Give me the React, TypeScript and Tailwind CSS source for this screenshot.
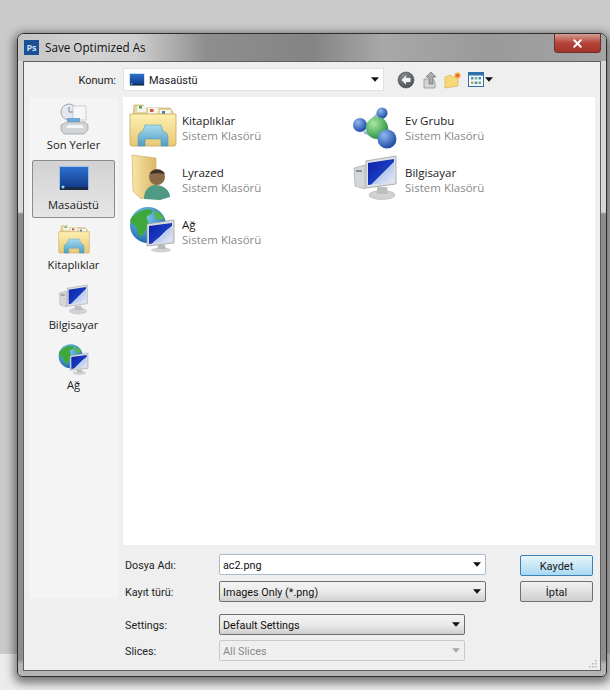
import React from 'react';
import { X } from 'lucide-react';

// small solid caret used by the comboboxes
const Caret = ({ muted = false }: { muted?: boolean }) => (
  <svg width="8" height="5" viewBox="0 0 9 5" className="shrink-0">
    <path d="M0 0h9L4.5 5z" fill={muted ? '#a8a8a8' : '#111'} />
  </svg>
);

const PsLogo = () => (
  <div className="w-[15px] h-[15px] bg-[#1c4f94] flex items-center justify-center text-[9px] font-bold text-[#cfe0f4] leading-none">
    Ps
  </div>
);

const FolderLib = ({ size = 48 }: { size?: number }) => (
  <svg width={size} height={size} viewBox="0 0 48 48">
    <defs>
      <linearGradient id="flib" x1="0" y1="0" x2="0" y2="1">
        <stop offset="0" stopColor="#fdf0b0" />
        <stop offset="1" stopColor="#e8c877" />
      </linearGradient>
      <linearGradient id="flibb" x1="0" y1="0" x2="0" y2="1">
        <stop offset="0" stopColor="#a8dcee" />
        <stop offset="1" stopColor="#4e9cc4" />
      </linearGradient>
    </defs>
    <path d="M5 4h9l3 3h24l3 4v4H4z" fill="#e4d49a" stroke="#c5ab62" strokeWidth="0.7" />
    <rect x="8" y="5" width="9" height="6" fill="#f4f4ec" />
    <rect x="10" y="5" width="3" height="2.5" fill="#4aa35a" />
    <rect x="19" y="7" width="10" height="6" fill="#f4f4ec" />
    <rect x="21" y="8" width="3.5" height="3" fill="#d2583a" />
    <rect x="31" y="9" width="11" height="6" fill="#f4f4ec" />
    <rect x="33" y="10" width="3" height="3" fill="#4f7fb0" />
    <path d="M1 13h46v30a2 2 0 0 1-2 2H3a2 2 0 0 1-2-2z" fill="url(#flib)" stroke="#c5a55a" strokeWidth="0.8" />
    <path d="M9 45v-9c0-3 2-5 5-6l2-6h16l2 6c3 1 5 3 5 6v9h-7v-7H16v7z" fill="url(#flibb)" stroke="#4d8fb0" strokeWidth="0.5" />
  </svg>
);

const Monitor = ({ size = 48 }: { size?: number }) => (
  <svg width={size} height={size} viewBox="0 0 48 48">
    <defs>
      <linearGradient id="scr" x1="0" y1="0" x2="1" y2="1">
        <stop offset="0" stopColor="#0a1fa8" />
        <stop offset="0.55" stopColor="#1a3cc0" />
        <stop offset="0.56" stopColor="#b8c8ee" />
        <stop offset="1" stopColor="#e8eef8" />
      </linearGradient>
    </defs>
    <path d="M2 15l11-3v24l-10-3z" fill="#d4d6d8" stroke="#9a9ea2" strokeWidth="0.6" />
    <rect x="4" y="17" width="6" height="2" fill="#8a8e92" />
    <path d="M14 8l30-5v28l-30 4z" fill="#dfe2e4" stroke="#9a9ea2" strokeWidth="0.8" />
    <path d="M16 10l26-4v23l-26 3z" fill="url(#scr)" />
    <ellipse cx="30" cy="42" rx="13" ry="4.5" fill="#d0d2d4" stroke="#a8aaac" strokeWidth="0.5" />
    <path d="M25 34h10l1 7H25z" fill="#bcbec0" />
  </svg>
);

const Globe = ({ size = 48 }: { size?: number }) => (
  <svg width={size} height={size} viewBox="0 0 48 48">
    <defs>
      <radialGradient id="gl" cx="0.4" cy="0.3" r="0.8">
        <stop offset="0" stopColor="#7fd0ee" />
        <stop offset="1" stopColor="#0f5aa8" />
      </radialGradient>
      <linearGradient id="scr2" x1="0" y1="0" x2="1" y2="1">
        <stop offset="0" stopColor="#0a1fa8" />
        <stop offset="0.55" stopColor="#1a3cc0" />
        <stop offset="0.56" stopColor="#b8c8ee" />
        <stop offset="1" stopColor="#e8eef8" />
      </linearGradient>
    </defs>
    <circle cx="19" cy="20" r="18" fill="url(#gl)" />
    <path d="M8 8c5-3 10-5 15-3 2 3-2 5-5 6-1 4 3 6 1 10-2 5-5 9-8 11-3-3-2-8-5-11-3-2-6-4-4-8z" fill="#3fa83c" />
    <path d="M26 6c4 1 8 4 9 8l-6 1c-3-2-4-6-3-9z" fill="#57b548" />
    <path d="M18 19l27-4v23l-27 3z" fill="#d9dcdf" stroke="#92969a" strokeWidth="0.7" />
    <path d="M20 21l23-3v18l-23 3z" fill="url(#scr2)" />
    <ellipse cx="32" cy="45" rx="10" ry="2.6" fill="#cfd1d3" />
    <path d="M29 40h7l1 4h-9z" fill="#b8babc" />
  </svg>
);

const HomeGroup = () => (
  <svg width="48" height="48" viewBox="0 -5 48 48">
    <defs>
      <radialGradient id="hgb" cx="0.35" cy="0.3" r="0.8">
        <stop offset="0" stopColor="#8fb8ee" />
        <stop offset="1" stopColor="#123f9e" />
      </radialGradient>
      <radialGradient id="hgg" cx="0.35" cy="0.3" r="0.8">
        <stop offset="0" stopColor="#a8e8a0" />
        <stop offset="1" stopColor="#1c8a3c" />
      </radialGradient>
    </defs>
    <path d="M10 24L26 8M28 8l12 26M12 26l26 10" stroke="#9fb8d8" strokeWidth="3" />
    <circle cx="30" cy="7" r="5.5" fill="url(#hgb)" />
    <circle cx="8" cy="19" r="7" fill="url(#hgb)" />
    <circle cx="25" cy="22" r="11" fill="url(#hgg)" />
    <circle cx="35" cy="33" r="9.5" fill="url(#hgb)" />
  </svg>
);

const UserFolder = () => (
  <svg width="48" height="48" viewBox="0 0 48 48">
    <defs>
      <linearGradient id="uf" x1="0" y1="0" x2="1" y2="0">
        <stop offset="0" stopColor="#f8e6a8" />
        <stop offset="1" stopColor="#dcb868" />
      </linearGradient>
    </defs>
    <path d="M3 2l24 3v36L12 46 4 38z" fill="url(#uf)" stroke="#c8a860" strokeWidth="0.6" />
    <circle cx="28" cy="24" r="8" fill="#8a6a48" />
    <path d="M21 21c1-5 12-6 15 0-3-1-11-1-15 0z" fill="#3a3228" />
    <path d="M15 46c0-9 5-14 12-14s14 5 14 12l-10 3z" fill="#4f9a84" />
  </svg>
);

const RecentPlaces = () => (
  <svg width="32" height="32" viewBox="0 0 32 32">
    <circle cx="11" cy="9" r="8" fill="#e2e8ee" stroke="#9fa8b0" strokeWidth="1" />
    <path d="M11 4v5h4" stroke="#7a8490" strokeWidth="1" fill="none" />
    <rect x="15" y="3" width="13" height="14" fill="#f4f6f8" stroke="#aeb6bc" strokeWidth="0.6" />
    <path d="M9 15h13v7H9z" fill="#6fa8d8" />
    <path d="M3 22l6-3h18l3 3v5l-4 4H6l-3-4z" fill="#d2d5d8" stroke="#888e94" strokeWidth="0.6" />
    <path d="M10 22h14l2 3H8z" fill="#f4f5f6" />
  </svg>
);

const Desktop = ({ size = 32 }: { size?: number }) => (
  <svg width={size} height={size} viewBox="0 0 32 32">
    <defs>
      <linearGradient id="dsk" x1="0" y1="0" x2="0" y2="1">
        <stop offset="0" stopColor="#2f6fd0" />
        <stop offset="1" stopColor="#123e8c" />
      </linearGradient>
    </defs>
    <rect x="1" y="3" width="30" height="24" fill="#9fc0e4" />
    <rect x="2" y="4" width="28" height="20" fill="url(#dsk)" />
    <rect x="2" y="24" width="28" height="3" fill="#1a2a44" />
    <circle cx="5" cy="24" r="1.6" fill="#8fd4f0" />
  </svg>
);

const NavItem = ({ label, icon, active = false }: { label: string; icon: React.ReactNode; active?: boolean }) => (
  <div
    className={`w-[83px] h-[58px] flex flex-col items-center pt-[2px] gap-[2px] rounded-[2px] border text-[11.2px] ${
      active ? 'bg-gradient-to-b from-[#d2d2d2] to-[#e6e6e6] border-[#8b8b8b]' : 'border-transparent'
    }`}
  >
    {icon}
    <span className="leading-[15px]">{label}</span>
  </div>
);

const FileItem = ({ name, icon }: { name: string; icon: React.ReactNode }) => (
  <div className="flex items-center h-[52px] w-[223px]">
    <div className="w-[54px] pl-[1px] shrink-0">{icon}</div>
    <div className="leading-[15px] pt-[6px]">
      <div className="text-[#1a1a1a]">{name}</div>
      <div className="text-[#8a8a8a]">Sistem Klasörü</div>
    </div>
  </div>
);

const Field = ({
  label,
  value,
  width,
  kind,
}: {
  label: string;
  value: string;
  width: string;
  kind: 'input' | 'select' | 'disabled';
}) => {
  const box =
    kind === 'input'
      ? 'bg-white border-[#a9bccd] text-[#111]'
      : kind === 'select'
        ? 'bg-gradient-to-b from-[#f3f3f3] via-[#ebebeb] to-[#cfcfcf] border-[#6f6f6f] text-[#111]'
        : 'bg-[#efefef] border-[#c8c8c8] text-[#8a8a8a]';
  return (
    <div className="flex items-center font-['Roboto',sans-serif] text-[10.8px]">
      <span className="w-[94px] pt-[4px] text-[#222]">{label}</span>
      <div className={`h-[21px] flex items-center justify-between pl-[3px] pr-[4px] rounded-[2px] border ${box} ${width}`}>
        <span className="pt-[3px]">{value}</span>
        <Caret muted={kind === 'disabled'} />
      </div>
    </div>
  );
};

const Toolbar = () => (
  <div className="flex items-center gap-[5.5px] ml-[13px]">
    <svg width="18" height="18" viewBox="0 0 18 18">
      <defs>
        <radialGradient id="bk" cx="0.4" cy="0.3" r="0.8">
          <stop offset="0" stopColor="#8b8f92" />
          <stop offset="1" stopColor="#45484a" />
        </radialGradient>
      </defs>
      <circle cx="9" cy="9" r="8" fill="url(#bk)" stroke="#55585a" strokeWidth="0.6" />
      <path d="M9 4.5L4.5 9 9 13.5V11h4.5V7H9z" fill="#f2f2f2" />
    </svg>
    <svg width="18" height="18" viewBox="0 0 18 18">
      <path d="M3 8h9l2 3v6H3z" fill="#d4d6d8" stroke="#85888a" strokeWidth="0.7" />
      <path d="M10 1l5 5h-3v7H8V6H5z" fill="#a9acae" stroke="#606366" strokeWidth="0.6" />
    </svg>
    <svg width="18" height="18" viewBox="0 0 18 18">
      <path d="M1 6l6-2 1 2h6v9L1 17z" fill="#f8d978" stroke="#d2a94c" strokeWidth="0.6" />
      <circle cx="13.5" cy="4.5" r="3" fill="#f0a23c" />
      <circle cx="13.5" cy="4.5" r="1.2" fill="#e8502a" />
    </svg>
    <div className="flex items-center gap-[1px]">
      <svg width="16" height="15" viewBox="0 0 16 15">
        <rect x="0.5" y="0.5" width="15" height="14" fill="#f4f8fc" stroke="#2f6fa8" />
        <rect x="1" y="1" width="14" height="2.5" fill="#2f6fa8" />
        <rect x="3" y="5" width="2.5" height="2.5" fill="#4f8fc8" />
        <rect x="6.8" y="5" width="2.5" height="2.5" fill="#7fae5f" />
        <rect x="10.5" y="5" width="2.5" height="2.5" fill="#4f8fc8" />
        <rect x="3" y="9.5" width="2.5" height="2.5" fill="#d09a4f" />
        <rect x="6.8" y="9.5" width="2.5" height="2.5" fill="#4f8fc8" />
        <rect x="10.5" y="9.5" width="2.5" height="2.5" fill="#7fae5f" />
      </svg>
      <Caret />
    </div>
  </div>
);

export default function App() {
  return (
    <div className="w-[610px] h-[690px] overflow-hidden bg-[linear-gradient(#cacaca_654px,#f4f4f4_654px,#ececec_655px)] pt-[33px] pl-[17px] font-['Open_Sans',sans-serif] text-[11.5px] text-[#1a1a1a]">
      {/* window */}
      <div className="w-[590px] h-[644px] rounded-t-[7px] rounded-b-[5px] border border-[#2e2e2e] bg-[linear-gradient(#d8d8d8_178px,#8c8c8c_180px,#8c8c8c_625px,#b4b4b4_630px)] px-[5px] pb-[5px] shadow-[0_3px_10px_3px_rgba(0,0,0,0.5)] flex flex-col">
        <div className="-mx-[5px] px-[5px] rounded-t-[6px] h-[27px] flex items-center justify-between shrink-0 bg-[linear-gradient(90deg,#c4c4c4_0%,#d2d2d2_12%,#cfcfcf_20%,#8e8e8e_32%,#848484_50%,#a8a8a8_62%,#9a9a9a_80%,#a4a4a4_100%)]">
          <div className="flex items-center gap-[5px] pl-[1px]">
            <PsLogo />
            <span className="text-[11.7px] text-[#111] pl-[1px]">Save Optimized As</span>
          </div>
          <div className="w-[47px] h-[19px] self-start rounded-b-[4px] border border-[#6b2f28] border-t-0 bg-gradient-to-b from-[#d59d92] via-[#b5433a] to-[#a5342b] flex items-center justify-center">
            <X size={13} strokeWidth={3.5} color="#fff" />
          </div>
        </div>

        {/* dialog body */}
        <div className="relative flex-1 bg-[#efefef] border border-[#5f5f5f] flex flex-col min-h-0">
          <div className="h-[35px] flex items-center shrink-0 font-['Roboto',sans-serif] text-[11px]">
            <span className="w-[92px] pt-[4px] text-right text-[#222]">Konum:</span>
            <div className="ml-[7px] w-[261px] h-[23px] bg-white border border-[#e2e2e2] flex items-center justify-between pl-[5px] pr-[4px]">
              <div className="flex items-center gap-[4px]">
                <Desktop size={16} />
                <span className="pt-[3px]">Masaüstü</span>
              </div>
              <Caret />
            </div>
            <Toolbar />
          </div>

          <div className="flex flex-1 min-h-0 pl-[5px] pr-[5px]">
            <div className="w-[89px] h-[502px] bg-[#f4f4f4] pl-[3px] pt-[3px] flex flex-col gap-[2px]">
              <NavItem label="Son Yerler" icon={<RecentPlaces />} />
              <NavItem label="Masaüstü" icon={<Desktop />} active />
              <NavItem label="Kitaplıklar" icon={<FolderLib size={32} />} />
              <NavItem label="Bilgisayar" icon={<Monitor size={32} />} />
              <NavItem label="Ağ" icon={<Globe size={32} />} />
            </div>

            <div className="ml-[5px] flex-1 flex flex-col">
              <div className="h-[448px] bg-white pl-[5px] pt-[2px] flex flex-wrap content-start">
                <FileItem name="Kitaplıklar" icon={<FolderLib />} />
                <FileItem name="Ev Grubu" icon={<HomeGroup />} />
                <FileItem name="Lyrazed" icon={<UserFolder />} />
                <FileItem name="Bilgisayar" icon={<Monitor />} />
                <FileItem name="Ağ" icon={<Globe />} />
              </div>

              <div className="flex justify-between pl-[2px] pt-[9px] pr-[2px]">
                <div className="flex flex-col">
                  <div className="flex flex-col gap-[6px]">
                    <Field label="Dosya Adı:" value="ac2.png" width="w-[267px]" kind="input" />
                    <Field label="Kayıt türü:" value="Images Only (*.png)" width="w-[267px]" kind="select" />
                  </div>
                  <div className="flex flex-col gap-[5px] mt-[12px]">
                    <Field label="Settings:" value="Default Settings" width="w-[246px]" kind="select" />
                    <Field label="Slices:" value="All Slices" width="w-[246px]" kind="disabled" />
                  </div>
                </div>
                <div className="flex flex-col gap-[5px] pt-[1px] font-['Roboto',sans-serif] text-[11px]">
                  <button className="w-[73px] h-[21px] pt-[3px] rounded-[2px] border border-[#3c7fb1] bg-gradient-to-b from-[#e8f5fc] to-[#a9d9f2] text-[#1a1a1a]">
                    Kaydet
                  </button>
                  <button className="w-[73px] h-[21px] pt-[3px] rounded-[2px] border border-[#707070] bg-gradient-to-b from-[#f2f2f2] to-[#cfcfcf] text-[#1a1a1a]">
                    İptal
                  </button>
                </div>
              </div>
            </div>
          </div>

          {/* resize grip */}
          <svg width="8" height="8" viewBox="0 0 8 8" className="absolute right-[3px] bottom-[2px]">
            <path d="M6 0h1.5v1.5H6zM6 3h1.5v1.5H6zM3 3h1.5v1.5H3zM6 6h1.5v1.5H6zM3 6h1.5v1.5H3zM0 6h1.5v1.5H0z" fill="#b4b4b4" />
          </svg>
        </div>
      </div>
    </div>
  );
}
